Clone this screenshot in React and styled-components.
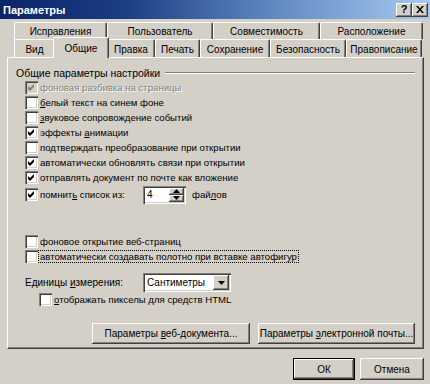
import React from 'react';
import styled, { createGlobalStyle, css } from 'styled-components';

const FONT = `"Liberation Sans", Arial, sans-serif`;

const GlobalStyle = createGlobalStyle`
  html, body { margin: 0; padding: 0; background: #d4d0c8; }
  body { font-family: ${FONT}; color: #000; }
  * { box-sizing: border-box; }
`;

const raised = css`
  box-shadow: inset -1px -1px #404040, inset 1px 1px #fff, inset -2px -2px #808080;
`;
const sunken = css`
  box-shadow: inset 1px 1px #808080, inset 2px 2px #404040, inset -1px -1px #fff, inset -2px -2px #d4d0c8;
`;

const Window = styled.div`
  width: 430px;
  height: 384px;
  background: #d4d0c8;
  display: flex;
  flex-direction: column;
  overflow: hidden;
  font-family: ${FONT};
  font-size: 10px;
`;

const TitleBar = styled.div`
  height: 19px;
  flex: none;
  display: flex;
  align-items: center;
  padding: 0 2px 0 3px;
  background: linear-gradient(90deg, #0a246a 0%, #1c3f86 30%, #5d86c0 62%, #a6caf0 100%);
`;

const Title = styled.div`
  flex: 1;
  color: #fff;
  font-weight: bold;
  font-size: 11px;
`;

const CapButton = styled.div`
  width: 16px;
  height: 14px;
  background: #d4d0c8;
  display: flex;
  align-items: center;
  justify-content: center;
  font-weight: bold;
  font-size: 11px;
  line-height: 1;
  ${raised};
`;

const Body = styled.div`
  flex: 1;
  display: flex;
  flex-direction: column;
  padding: 3px 6px 0 7px;
`;

const TabRow = styled.div`
  display: flex;
  height: ${p => p.$h}px;
  padding-left: 7px;
`;

const Tab = styled.div`
  width: ${p => p.$w}px;
  flex: none;
  display: flex;
  align-items: center;
  justify-content: center;
  padding-top: 1px;
  border-top: 1px solid #fff;
  border-left: 1px solid #fff;
  border-right: 1px solid #404040;
  border-radius: 2px 2px 0 0;
  box-shadow: inset -1px 0 #808080;
  background: #d4d0c8;
  white-space: nowrap;
  ${p => p.$active && css`
    width: ${p.$w + 4}px;
    margin: -2px -2px -1px;
    position: relative;
    z-index: 1;
    padding-top: 0;
  `}
`;

const Panel = styled.div`
  height: 292px;
  flex: none;
  display: flex;
  flex-direction: column;
  padding: 8px 8px 0 8px;
  border-top: 1px solid #fff;
  border-left: 1px solid #fff;
  border-right: 1px solid #404040;
  border-bottom: 1px solid #404040;
  box-shadow: inset -1px -1px #808080;
`;

const GroupHeader = styled.div`
  display: flex;
  align-items: center;
  height: 13px;
  margin-bottom: 1px;
  font-size: 10.5px;
`;

const GroupLine = styled.div`
  flex: 1;
  height: 2px;
  margin-left: 5px;
  border-top: 1px solid #808080;
  border-bottom: 1px solid #fff;
`;

const Row = styled.div`
  display: flex;
  align-items: center;
  height: ${p => p.$h || 15}px;
  padding-left: ${p => p.$indent ?? 9}px;
  margin-top: ${p => p.$mt || 0}px;
  white-space: nowrap;
`;

const Box = styled.span`
  width: 13px;
  height: 13px;
  flex: none;
  display: flex;
  background: ${p => (p.$disabled ? '#d4d0c8' : '#fff')};
  ${sunken};
`;

const Label = styled.span`
  margin-left: 1px;
  padding: 0 1px;
  font-size: 9.6px;
  color: ${p => (p.$disabled ? '#808080' : '#000')};
  text-shadow: ${p => (p.$disabled ? '1px 1px #fff' : 'none')};
  outline: ${p => (p.$focus ? '1px dotted #000' : 'none')};
  width: ${p => (p.$w ? `${p.$w}px` : 'auto')};
  flex: none;
`;

const FieldLabel = styled.span`
  width: ${p => p.$w}px;
  flex: none;
`;

const Spin = styled.div`
  width: 43px;
  height: 18px;
  display: flex;
  background: #fff;
  padding: 2px;
  ${sunken};
`;

const FieldText = styled.span`
  flex: 1;
  padding-left: 2px;
  display: flex;
  align-items: center;
`;

const SpinButtons = styled.div`
  width: 15px;
  display: flex;
  flex-direction: column;
`;

const SpinHalf = styled.div`
  flex: 1;
  background: #d4d0c8;
  display: flex;
  align-items: center;
  justify-content: center;
  ${raised};
`;

const Suffix = styled.span`
  margin-left: 6px;
  font-size: 9.6px;
`;

const Select = styled.div`
  width: 88px;
  height: 19px;
  display: flex;
  background: #fff;
  padding: 2px;
  ${sunken};
`;

const DropButton = styled.div`
  width: 16px;
  background: #d4d0c8;
  display: flex;
  align-items: center;
  justify-content: center;
  ${raised};
`;

const ButtonRow = styled.div`
  display: flex;
  justify-content: flex-end;
  gap: ${p => p.$gap}px;
  margin-top: ${p => p.$mt}px;
`;

const Button = styled.div`
  width: ${p => p.$w}px;
  height: ${p => p.$h || 21}px;
  display: flex;
  align-items: center;
  justify-content: center;
  background: #d4d0c8;
  white-space: nowrap;
  ${p => p.$default
    ? css`
        border: 1px solid #000;
        box-shadow: inset -1px -1px #404040, inset 1px 1px #fff, inset -2px -2px #808080;
      `
    : raised};
`;

const ButtonText = styled.span`
  white-space: pre;
`;

const Check = ({ color = '#000' }) => (
  <svg width="13" height="13" viewBox="0 0 13 13">
    <polygon points="3,5 5,7 9,3 9,6 5,10 3,8" fill={color} />
  </svg>
);

const Tri = ({ up }) => (
  <svg width="7" height="4" viewBox="0 0 7 4">
    <polygon points={up ? '3.5,0 7,4 0,4' : '0,0 7,0 3.5,4'} fill="#000" />
  </svg>
);

const CheckItem = ({ checked, disabled, focus, indent, mt, children }) => (
  <Row $indent={indent} $mt={mt}>
    <Box $disabled={disabled}>{checked && <Check color={disabled ? '#808080' : '#000'} />}</Box>
    <Label $disabled={disabled} $focus={focus}>{children}</Label>
  </Row>
);

const backTabs = [
  ['Исправления', 93],
  ['Пользователь', 106],
  ['Совместимость', 107],
  ['Расположение', 103],
];

const frontTabs = [
  ['Вид', 41],
  ['Общие', 52, true],
  ['Правка', 48],
  ['Печать', 45],
  ['Сохранение', 70],
  ['Безопасность', 76],
  ['Правописание', 76],
];

export default function App() {
  return (
    <Window>
      <GlobalStyle />
      <TitleBar>
        <Title>Параметры</Title>
        <CapButton>?</CapButton>
        <CapButton>
          <svg width="8" height="7" viewBox="0 0 8 7">
            <path d="M0 0h2l2 2.5L6 0h2L5 3.5 8 7H6L4 4.5 2 7H0l3-3.5z" fill="#000" />
          </svg>
        </CapButton>
      </TitleBar>
      <Body>
        <TabRow $h={17}>
          {backTabs.map(([t, w]) => (
            <Tab key={t} $w={w}>{t}</Tab>
          ))}
        </TabRow>
        <TabRow $h={18}>
          {frontTabs.map(([t, w, a]) => (
            <Tab key={t} $w={w} $active={a}>{t}</Tab>
          ))}
        </TabRow>
        <Panel>
          <GroupHeader>
            <span>Общие параметры настройки</span>
            <GroupLine />
          </GroupHeader>
          <CheckItem checked disabled>фоновая разбивка на страницы</CheckItem>
          <CheckItem><u>б</u>елый текст на синем фоне</CheckItem>
          <CheckItem><u>з</u>вуковое сопровождение событий</CheckItem>
          <CheckItem checked>эффекты <u>а</u>нимации</CheckItem>
          <CheckItem>подтверждать преобразование при открытии</CheckItem>
          <CheckItem checked>автоматически обновлять связи при открытии</CheckItem>
          <CheckItem checked>отправлять документ по почте как вложение</CheckItem>
          <Row $h={19}>
            <Box><Check /></Box>
            <Label $w={104}>помнит<u>ь</u> список из:</Label>
            <Spin>
              <FieldText>4</FieldText>
              <SpinButtons>
                <SpinHalf><Tri up /></SpinHalf>
                <SpinHalf><Tri /></SpinHalf>
              </SpinButtons>
            </Spin>
            <Suffix>фай<u>л</u>ов</Suffix>
          </Row>
          <CheckItem mt={30}>фоновое открытие веб-страниц</CheckItem>
          <CheckItem focus>автоматически создавать полотно при вставке автофигур</CheckItem>
          <Row $h={19} $mt={9}>
            <FieldLabel $w={118}>Единицы <u>и</u>змерения:</FieldLabel>
            <Select>
              <FieldText>Сантиметры</FieldText>
              <DropButton><Tri /></DropButton>
            </Select>
          </Row>
          <CheckItem indent={23}><u>о</u>тображать пикселы для средств HTML</CheckItem>
          <ButtonRow $gap={8} $mt={16}>
            <Button $w={158}><ButtonText>Параметры <u>в</u>еб-документа...</ButtonText></Button>
            <Button $w={157}><ButtonText>Параметры <u>э</u>лектронной почты...</ButtonText></Button>
          </ButtonRow>
        </Panel>
        <ButtonRow $gap={5} $mt={9}>
          <Button $w={62} $h={22} $default><ButtonText>ОК</ButtonText></Button>
          <Button $w={64} $h={22}><ButtonText>Отмена</ButtonText></Button>
        </ButtonRow>
      </Body>
    </Window>
  );
}
